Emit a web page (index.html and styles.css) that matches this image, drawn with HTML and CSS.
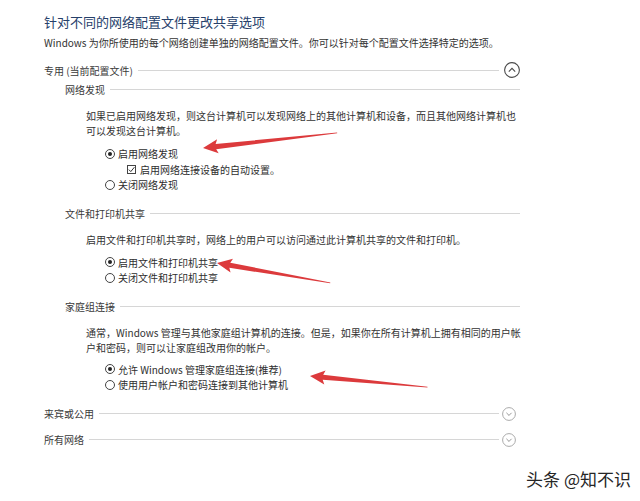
FILE: index.html
```html
<!DOCTYPE html>
<html>
  <head>
    <meta charset="UTF-8">
    <title>高级共享设置</title>
    <link rel="stylesheet" href="styles.css">
  </head>

  <body>
    <div id="page">
      <h1 class="title">针对不同的网络配置文件更改共享选项</h1>
      <p class="intro">Windows 为你所使用的每个网络创建单独的网络配置文件。你可以针对每个配置文件选择特定的选项。</p>

      <div class="section">
        <div class="section__head">
          <span>专用 (当前配置文件)</span>
          <i class="section__rule"></i>
          <svg class="toggle toggle--up" width="16" height="16" viewBox="0 0 16 16">
            <circle cx="8" cy="8" r="7.4" fill="none" stroke="#4a4a4a" stroke-width="1.1"/>
            <path d="M4.8 9.6 L8 6.4 L11.2 9.6" fill="none" stroke="#4a4a4a" stroke-width="1.1"/>
          </svg>
        </div>

        <div class="group group--first">
          <div class="group__head"><span>网络发现</span><i class="group__rule"></i></div>
          <p class="group__text">如果已启用网络发现，则这台计算机可以发现网络上的其他计算机和设备，而且其他网络计算机也可以发现这台计算机。</p>
          <ul class="options">
            <li class="option"><span class="radio radio--on"></span>启用网络发现</li>
            <li class="option option--sub"><span class="check">
              <svg width="9" height="9" viewBox="0 0 9 9"><path d="M1.8 4.6 L3.8 6.6 L7.4 2.2" fill="none" stroke="#333" stroke-width="1"/></svg>
            </span>启用网络连接设备的自动设置。</li>
            <li class="option"><span class="radio"></span>关闭网络发现</li>
          </ul>
        </div>

        <div class="group">
          <div class="group__head"><span>文件和打印机共享</span><i class="group__rule"></i></div>
          <p class="group__text">启用文件和打印机共享时，网络上的用户可以访问通过此计算机共享的文件和打印机。</p>
          <ul class="options">
            <li class="option"><span class="radio radio--on"></span>启用文件和打印机共享</li>
            <li class="option"><span class="radio"></span>关闭文件和打印机共享</li>
          </ul>
        </div>

        <div class="group">
          <div class="group__head"><span>家庭组连接</span><i class="group__rule"></i></div>
          <p class="group__text">通常，Windows 管理与其他家庭组计算机的连接。但是，如果你在所有计算机上拥有相同的用户帐户和密码，则可以让家庭组改用你的帐户。</p>
          <ul class="options options--last">
            <li class="option"><span class="radio radio--on"></span>允许 Windows 管理家庭组连接(推荐)</li>
            <li class="option"><span class="radio"></span>使用用户帐户和密码连接到其他计算机</li>
          </ul>
        </div>
      </div>

      <div class="section section--closed">
        <div class="section__head">
          <span>来宾或公用</span>
          <i class="section__rule"></i>
          <svg class="toggle" width="14" height="14" viewBox="0 0 14 14">
            <circle cx="7" cy="7" r="6.4" fill="none" stroke="#aaa" stroke-width="1"/>
            <path d="M4.4 5.8 L7 8.4 L9.6 5.8" fill="none" stroke="#999" stroke-width="1"/>
          </svg>
        </div>
      </div>

      <div class="section section--closed">
        <div class="section__head">
          <span>所有网络</span>
          <i class="section__rule"></i>
          <svg class="toggle" width="14" height="14" viewBox="0 0 14 14">
            <circle cx="7" cy="7" r="6.4" fill="none" stroke="#aaa" stroke-width="1"/>
            <path d="M4.4 5.8 L7 8.4 L9.6 5.8" fill="none" stroke="#999" stroke-width="1"/>
          </svg>
        </div>
      </div>
    </div>

    <!-- red pointers drawn over the screenshot -->
    <svg class="marks" width="640" height="501" viewBox="0 0 640 501">
      <g fill="#dc3a3c">
        <polygon transform="translate(203 148) rotate(-6.4)" points="0,0 15,-7 13,-2.6 135,-0.4 135,0.4 13,2.6 15,7"/>
        <polygon transform="translate(217 263) rotate(10)" points="0,0 15,-7 13,-2.6 115,-0.4 115,0.4 13,2.6 15,7"/>
        <polygon transform="translate(310 376) rotate(5.4)" points="0,0 15,-7 13,-2.6 118,-0.4 118,0.4 13,2.6 15,7"/>
      </g>
    </svg>

    <div class="watermark">头条 @知不识</div>
  </body>
</html>
```

FILE: styles.css
```css
* {
  font-family: "Noto Sans CJK SC", "Noto Sans", sans-serif;
}
html, body {
  margin: 0;
  padding: 0;
  width: 640px;
  height: 501px;
  background: #fff;
  overflow: hidden;
}
body {
  position: relative;
}

#page {
  width: 476px;
  padding: 12px 0 0 44px;
  color: #333;
  font-size: 10px;
}

.title {
  margin: 0;
  font-size: 13px;
  font-weight: normal;
  line-height: 20px;
  color: #26406a;
}
.intro {
  margin: 2px 0 0;
  line-height: 18px;
}

.section__head, .group__head {
  display: flex;
  align-items: center;
  height: 18px;
  color: #3a3a3a;
}
.section__head {
  margin-top: 9px;
}
.section--closed .section__head {
  margin-top: 8px;
}
.section--closed:nth-of-type(2) .section__head {
  margin-top: 12px;
}
.section__rule, .group__rule {
  flex: 1;
  height: 1px;
  margin-left: 5px;
  background: #d6d6d6;
}
.toggle {
  flex: none;
  margin-left: 5px;
}
.section--closed .toggle {
  margin: 0 4px 0 3px;
}

.group {
  padding-left: 21px;
}
.group__head {
  margin-top: 12px;
}
.group--first .group__head {
  margin-top: 1px;
}
.group__text {
  margin: 9px -4px 0 0;
  padding-left: 21px;
  line-height: 15px;
}
.group--first .group__text {
  margin-top: 10px;
}

.options {
  list-style: none;
  margin: 8px 0 0;
  padding: 0 0 0 40px;
  line-height: 15.5px;
}
.options--last {
  margin-top: 7px;
}
.option {
  display: flex;
  align-items: center;
  color: #2e2e2e;
}
.option--sub {
  padding-left: 22px;
}

.radio {
  box-sizing: border-box;
  width: 10px;
  height: 10px;
  margin-right: 3px;
  border: 1px solid #444;
  border-radius: 50%;
  display: flex;
  align-items: center;
  justify-content: center;
}
.radio--on::after {
  content: "";
  width: 4px;
  height: 4px;
  border-radius: 50%;
  background: #222;
}
.check {
  box-sizing: border-box;
  width: 9px;
  height: 9px;
  margin-right: 4px;
  border: 1px solid #444;
  display: flex;
}
.check svg {
  margin: -1px;
}

.marks {
  position: absolute;
  top: 0;
  left: 0;
  pointer-events: none;
}

.watermark {
  position: absolute;
  right: 9px;
  top: 468px;
  font-size: 17px;
  line-height: 22px;
  color: #262626;
  text-shadow: 1px 0 1px #fff, -1px 0 1px #fff, 0 1px 1px #fff, 0 -1px 1px #fff;
}
```
